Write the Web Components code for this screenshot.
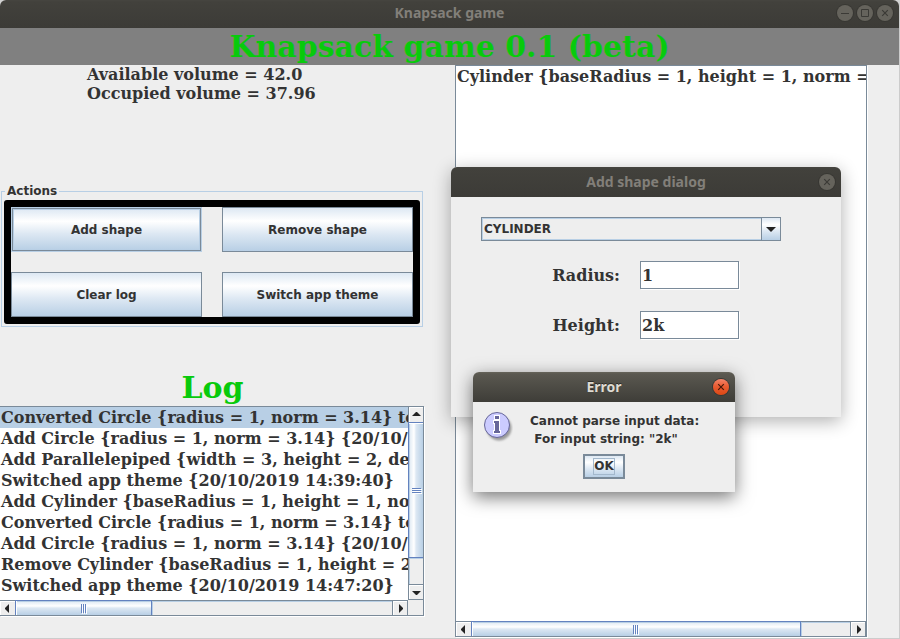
<!DOCTYPE html>
<html lang="en">
<head>
<meta charset="utf-8">
<title>Knapsack game</title>
<style>
  html, body { height: 100%; }
  body {
    margin: 0; overflow: hidden; background: #d2d2d2; color: #333;
    --serif: "DejaVu Serif", serif;
    --sans: "DejaVu Sans", sans-serif;
    --chrome: "Noto Sans", sans-serif;
    --panel: #eee;
    --line: #7a8a99;
    --soft: #b8cfe5;
    --accent: #6382bf;
    --green: #08ca0c;
    --shine: linear-gradient(#dde8f3, #fff 30%, #dde8f3 60%, #b8cfe5);
    font: bold 12px/14px var(--sans);
  }
</style>
</head>
<body>
<knapsack-app></knapsack-app>

<script>
const define = (name, html, setup) => customElements.define(name, class extends HTMLElement {
  constructor() {
    super();
    const t = document.createElement('template');
    t.innerHTML = html;
    this.attachShadow({ mode: 'open' }).append(t.content.cloneNode(true));
  }
  connectedCallback() { if (setup) setup(this, this.shadowRoot); }
});

/* Window frame: title bar with round controls, body in the slot */
define('app-window', `
<style>
  :host { display: flex; flex-direction: column; background: var(--panel); border-radius: 6px 6px 0 0; }
  header {
    flex: none; display: grid; grid-template-columns: 1fr auto 1fr; align-items: center;
    height: 30px; padding: 0 6px; box-sizing: border-box; border-radius: 6px 6px 0 0;
    background: linear-gradient(#464540, #42413c 2px, #3c3b37); color: #827f79;
  }
  :host([main]) header { height: 28px; padding-bottom: 2px; }
  :host([active]) header { background: linear-gradient(#66645a, #5a5850 2px, #3e3d38); color: #dfdbd2; text-shadow: 0 -1px #2c2b28; }
  h2 { grid-column: 2; margin: 0; font: 700 14px/20px var(--chrome); }
  .controls { grid-column: 3; justify-self: end; display: flex; gap: 4px; }
  button { width: 16px; height: 16px; padding: 0; border: 0; border-radius: 50%; background: #65635c; color: #3b3a36; box-shadow: 0 0 0 1px #383733; }
  svg { display: block; width: 16px; height: 16px; fill: none; stroke: currentColor; }
  :host([active]) button { background: linear-gradient(#f4846a, #ea5c33 45%, #dd4814); color: #45170a; }
  :host(:not([main])) .wide { display: none; }
  main { flex: 1; display: flex; flex-direction: column; min-height: 0; }
</style>
<header>
  <h2></h2>
  <div class="controls">
    <button class="wide" aria-label="Minimize"><svg viewBox="0 0 16 16"><path d="M4 8.5h8"/></svg></button>
    <button class="wide" aria-label="Maximize"><svg viewBox="0 0 16 16"><path d="M4.5 4.5h7v7h-7z"/></svg></button>
    <button aria-label="Close"><svg viewBox="0 0 16 16"><path d="M5.2 5.2l5.6 5.6M10.8 5.2l-5.6 5.6" stroke-width="1.2"/></svg></button>
  </div>
</header>
<main><slot></slot></main>`, (h, r) => r.querySelector('h2').textContent = h.getAttribute('heading'));

define('metal-button', `
<style>
  :host { display: grid; }
  button {
    border: 1px solid var(--line); background: var(--shine); color: inherit; font: inherit;
    padding: 0 8px; margin: 0; outline: none; border-radius: 0;
  }
  :host([rollover]) { border: 1px solid var(--soft); }
  :host([rollover]) button { box-shadow: inset 0 0 0 1px var(--soft); }
  :host([ok]) button { border-width: 2px; height: 25px; padding: 2px 8px; }
  :host([ok]) span { display: block; border: 1px solid #a3b8cc; line-height: 15px; }
</style>
<button><span><slot></slot></span></button>`);

/* The thumb takes --share percent of the track */
define('scroll-bar', `
<style>
  :host { display: flex; background: var(--panel); box-sizing: border-box; min-width: 0; min-height: 0; }
  :host([dir=h]) { height: 15px; border-top: 1px solid var(--line); border-right: 1px solid var(--line); }
  :host([dir=v]) { width: 15px; flex-direction: column; border-left: 1px solid var(--line); border-bottom: 1px solid var(--line); }
  button { flex: none; width: 14px; height: 14px; padding: 0; border: 0; background: var(--panel); box-shadow: inset 1px 1px #fff; }
  :host([dir=h]) button { width: 15px; }
  :host([dir=v]) button { height: 15px; }
  svg { display: block; margin: auto; fill: #222; }
  .thumb { flex: var(--share) 1 0; display: flex; align-items: center; justify-content: center; gap: 2px; min-width: 0; min-height: 0; box-sizing: border-box; }
  .rest { flex: calc(100 - var(--share)) 1 0; box-shadow: inset 1px 1px var(--soft); }
  i { background: var(--accent); box-shadow: 1px 1px #fff; }
  :host([dir=h]) .thumb { border: solid var(--accent); border-width: 0 1px; background: linear-gradient(#b8cfe5 1px, #e4edf5 1px, #fff 5px, #dde8f3 7px, #b8cfe5); box-shadow: 0 -1px var(--accent), inset 1px 0 #fff; }
  :host([dir=v]) .thumb { flex-direction: column; border: solid var(--accent); border-width: 1px 0; background: linear-gradient(90deg, #b8cfe5 1px, #e4edf5 1px, #fff 5px, #dde8f3 7px, #b8cfe5); box-shadow: -1px 0 var(--accent), inset 0 1px #fff; }
  :host([dir=h]) .thumb { gap: 1px; }
  :host([dir=v]) .thumb { gap: 1px; }
  :host([dir=h]) i { width: 1px; height: 9px; }
  :host([dir=v]) i { width: 9px; height: 1px; }
  :host([dir=h]) .next { border-left: 1px solid var(--line); }
  :host([dir=v]) .next { border-top: 1px solid var(--line); }
</style>
<button class="prev" aria-label="Scroll back"><svg width="9" height="9" viewBox="0 0 9 9"><path/></svg></button>
<div class="thumb"><i></i><i></i><i></i></div>
<div class="rest"></div>
<button class="next" aria-label="Scroll forward"><svg width="9" height="9" viewBox="0 0 9 9"><path/></svg></button>`,
(h, r) => {
  const [a, b] = r.querySelectorAll('path');
  const v = h.getAttribute('dir') === 'v';
  a.setAttribute('d', v ? 'M4 2h1L9 6H0z' : 'M2 4v1L6 9V0z');
  b.setAttribute('d', v ? 'M0 3h9L5 7H4z' : 'M3 0v9l4-4V4z');
});

/* List in a scroll pane: entries in the slot */
define('scroll-list', `
<style>
  :host {
    display: grid; grid-template: minmax(0, 1fr) auto / minmax(0, 1fr) auto; min-width: 0; box-sizing: border-box;
    border: 1px solid var(--line); background: var(--panel); box-shadow: 1px 1px #fff;
  }
  :host([flush]) { border-left: 0; }
  .view { grid-area: 1 / 1; background: #fff; overflow: hidden; padding: 0 0 4px; font: bold 16px/21px var(--serif); white-space: nowrap; }
  ::slotted(div) { padding: 0 1px; }
  ::slotted(.selected) { background: var(--soft); }
  [dir=v] { grid-area: 1 / 2; --share: 84; }
  [dir=h] { grid-area: 2 / 1; }
  :host(:not([vertical])) [dir=v] { display: none; }
</style>
<div class="view"><slot></slot></div>
<scroll-bar dir="v"></scroll-bar>
<scroll-bar dir="h"></scroll-bar>`);

define('action-group', `
<style>
  :host { display: block; }
  fieldset { margin: 0 2px 0 1px; padding: 2px; border: 1px solid var(--soft); min-width: 0; }
  legend { margin-left: 1px; padding: 0 2px; line-height: 14px; }
  .grid { display: grid; grid-template-columns: 1fr 1fr; grid-auto-rows: 45px; gap: 20px; border: 7px solid #000; border-radius: 3px; }
</style>
<fieldset><legend>Actions</legend><div class="grid"><slot></slot></div></fieldset>`);

define('combo-box', `
<style>
  :host { display: grid; grid-template-columns: 1fr 20px; height: 24px; }
  select {
    grid-area: 1 / 1 / 2 / 3; appearance: none; margin: 0; padding: 0 22px 0 2px; border: 1px solid var(--line); border-radius: 0;
    box-shadow: inset 0 0 0 1px var(--soft); background: var(--panel); color: inherit; font: inherit; outline: none;
  }
  span { grid-area: 1 / 2; z-index: 1; pointer-events: none; display: grid; place-items: center; border: 1px solid var(--line); background: var(--shine); }
</style>
<select aria-label="Shape"><option>CYLINDER</option></select>
<span><svg width="10" height="5" viewBox="0 0 10 5"><path d="M0 0h10L5 5z" fill="#222"/></svg></span>`);

define('text-field', `
<style>
  :host { display: grid; grid-template-columns: 139px 99px; column-gap: 20px; height: 30px; align-items: start; font: bold 16px/30px var(--serif); }
  label { text-align: right; }
  input { min-width: 0; height: 28px; box-sizing: border-box; margin: 0; padding: 1px 1px 0; border: 1px solid var(--line); border-radius: 0; box-shadow: 1px 1px #fff; background: #fff; color: inherit; font: inherit; outline: none; }
</style>
<label for="f"></label><input id="f" type="text">`,
(h, r) => {
  r.querySelector('label').textContent = h.getAttribute('label');
  r.querySelector('input').value = h.getAttribute('value');
});

define('shape-form', `
<style>
  :host { display: flex; flex-direction: column; gap: 20px; padding: 20px 60px 76px 30px; }
</style>
<combo-box></combo-box>
<text-field label="Radius:" value="1"></text-field>
<text-field label="Height:" value="2k"></text-field>`);

define('error-message', `
<style>
  :host { display: grid; grid-template-columns: auto 1fr; column-gap: 17px; row-gap: 6px; padding: 8px 10px 13px; }
  svg { display: block; width: 30px; height: 34px; }
  p { margin: 0; padding-top: 2px; line-height: 18px; white-space: pre; }
  metal-button { grid-column: 1 / 3; justify-self: center; }
</style>
<svg viewBox="0 0 30 34" aria-label="Information" role="img">
  <defs><filter id="b" x="-20%" y="-20%" width="150%" height="150%"><feGaussianBlur stdDeviation="1.2"/></filter></defs>
  <circle cx="16" cy="18" r="12.5" fill="#777" opacity=".7" filter="url(#b)"/>
  <circle cx="14" cy="15" r="12.5" fill="#ccf" stroke="#669"/>
  <path d="M11 5h6v5h-6zM10 10h7v10h1v4h-8v-4h1v-6h-1z" fill="#fff"/>
  <path d="M12 6h4v3h-4zM11 11h5v10h1v2h-6v-2h1v-8h-1z" fill="#669"/>
</svg>
<p>Cannot parse input data:
 For input string: "2k"</p>
<metal-button ok>OK</metal-button>`);

define('knapsack-app', `
<style>
  :host { display: block; height: 100%; position: relative; }
  .root { height: 100%; box-sizing: border-box; border: solid #ccc; border-width: 0 1px 1px 0; }
  h1, h3 { margin: 0; color: var(--green); text-align: center; font: bold 30px/37px var(--serif); }
  h1 { background: #808080; }
  .content { flex: 1; display: grid; grid-template-columns: 425fr 412fr; column-gap: 30px; padding-right: 32px; min-height: 0; }
  .left { display: grid; grid-template-rows: 119fr auto 311fr; min-width: 0; }
  .stats { padding-left: 87px; font: bold 16px/19px var(--serif); }
  .log { display: flex; flex-direction: column; justify-content: flex-end; padding-bottom: 22px; min-width: 0; }
  .log scroll-list { margin-right: 1px; --share: 36; }
  .shapes { margin-bottom: 1px; --share: 87; }
  .dialog { position: absolute; }
  .add { left: 451px; top: 167px; width: 390px; box-shadow: 0 4px 18px rgba(0,0,0,.32); }
  .error { left: 473px; top: 372px; width: 262px; box-shadow: 0 5px 18px rgba(0,0,0,.55); }
</style>
<app-window class="root" main heading="Knapsack game">
  <h1>Knapsack game 0.1 (beta)</h1>
  <div class="content">
    <div class="left">
      <div class="stats"><div>Available volume = 42.0</div><div>Occupied volume = 37.96</div></div>
      <action-group>
        <metal-button rollover>Add shape</metal-button>
        <metal-button>Remove shape</metal-button>
        <metal-button>Clear log</metal-button>
        <metal-button>Switch app theme</metal-button>
      </action-group>
      <section class="log">
        <h3>Log</h3>
        <scroll-list flush vertical>
          <div class="selected">Converted Circle {radius = 1, norm = 3.14} to</div>
          <div>Add Circle {radius = 1, norm = 3.14} {20/10/</div>
          <div>Add Parallelepiped {width = 3, height = 2, de</div>
          <div>Switched app theme {20/10/2019 14:39:40}</div>
          <div>Add Cylinder {baseRadius = 1, height = 1, no</div>
          <div>Converted Circle {radius = 1, norm = 3.14} to</div>
          <div>Add Circle {radius = 1, norm = 3.14} {20/10/</div>
          <div>Remove Cylinder {baseRadius = 1, height = 2</div>
          <div>Switched app theme {20/10/2019 14:47:20}</div>
        </scroll-list>
      </section>
    </div>
    <scroll-list class="shapes">
      <div>Cylinder {baseRadius = 1, height = 1, norm =</div>
    </scroll-list>
  </div>
</app-window>
<app-window class="dialog add" heading="Add shape dialog"><shape-form></shape-form></app-window>
<app-window class="dialog error" active heading="Error"><error-message></error-message></app-window>`);
</script>
</body>
</html>
